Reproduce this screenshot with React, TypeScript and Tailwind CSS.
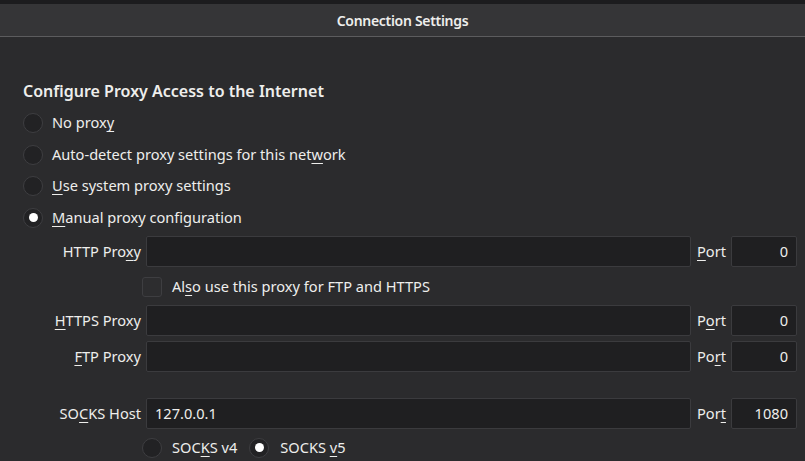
import React from "react";

const font = { fontFamily: '"Noto Sans", "Open Sans", sans-serif' };

function U({ children }: { children: React.ReactNode }) {
  return <span className="underline decoration-1 underline-offset-[3px]">{children}</span>;
}

function Radio({ checked = false }: { checked?: boolean }) {
  return (
    <span className="flex h-[20px] w-[20px] shrink-0 items-center justify-center rounded-full border border-[#3e3e41] bg-[#222224]">
      {checked && <span className="h-[9px] w-[9px] rounded-full bg-white" />}
    </span>
  );
}

function Field({ value = "", right = false }: { value?: string; right?: boolean }) {
  return (
    <div
      className={
        "flex h-[31px] items-center rounded-[2px] border border-[#3b3b3e] bg-[#1f1f21] px-[8px] text-[#eeeeec] " +
        (right ? "justify-end" : "")
      }
    >
      {value}
    </div>
  );
}

function Row({
  label,
  port,
  value,
  portValue,
}: {
  label: React.ReactNode;
  port: React.ReactNode;
  value?: string;
  portValue: string;
}) {
  return (
    <div className="flex items-center">
      <div className="w-[141px] text-right">{label}</div>
      <div className="ml-[5px] flex-1">
        <Field value={value} />
      </div>
      <div className="ml-[6px] w-[34px]">{port}</div>
      <div className="w-[66px]">
        <Field value={portValue} right />
      </div>
    </div>
  );
}

export default function App() {
  return (
    <div className="h-[461px] w-[805px] overflow-hidden bg-[#2b2b2d] text-[14.6px] text-[#eeeeec]" style={font}>
      <div className="h-[4px] bg-[#1c1c1e]" />
      <div className="flex h-[33px] items-center justify-center border-b border-[#5c5c5e] bg-[#353537] text-[14px] font-semibold tracking-[-0.3px]">
        Connection Settings
      </div>

      <div className="pr-[8px] pt-[43px]">
        <div className="pl-[23px] text-[16px] font-semibold leading-[22px]">Configure Proxy Access to the Internet</div>

        <div className="mt-[11px] flex flex-col gap-[11.67px] pl-[23px]">
          <label className="flex h-[20px] items-center gap-[9px]">
            <Radio />
            <span>
              No prox<U>y</U>
            </span>
          </label>
          <label className="flex h-[20px] items-center gap-[9px]">
            <Radio />
            <span>
              Auto-detect proxy settings for this net<U>w</U>ork
            </span>
          </label>
          <label className="flex h-[20px] items-center gap-[9px]">
            <Radio />
            <span>
              <U>U</U>se system proxy settings
            </span>
          </label>
          <label className="flex h-[20px] items-center gap-[9px]">
            <Radio checked />
            <span>
              <U>M</U>anual proxy configuration
            </span>
          </label>
        </div>

        <div className="mt-[8px]">
          <Row
            label={
              <>
                HTTP Pro<U>x</U>y
              </>
            }
            port={
              <>
                <U>P</U>ort
              </>
            }
            portValue="0"
          />
          <label className="ml-[142px] mt-[10px] flex h-[20px] items-center gap-[10px]">
            <span className="h-[20px] w-[20px] rounded-[3px] border border-[#3e3e41] bg-[#2d2d2f]" />
            <span>
              Al<U>s</U>o use this proxy for FTP and HTTPS
            </span>
          </label>
          <div className="mt-[8px] flex flex-col gap-[5px]">
            <Row
              label={
                <>
                  <U>H</U>TTPS Proxy
                </>
              }
              port={
                <>
                  P<U>o</U>rt
                </>
              }
              portValue="0"
            />
            <Row
              label={
                <>
                  <U>F</U>TP Proxy
                </>
              }
              port={
                <>
                  Po<U>r</U>t
                </>
              }
              portValue="0"
            />
          </div>
          <div className="mt-[26px]">
            <Row
              label={
                <>
                  SO<U>C</U>KS Host
                </>
              }
              value="127.0.0.1"
              port={
                <>
                  Por<U>t</U>
                </>
              }
              portValue="1080"
            />
          </div>
          <div className="ml-[142px] mt-[8px] flex items-center">
            <label className="flex items-center gap-[10px]">
              <Radio />
              <span>
                SOC<U>K</U>S v4
              </span>
            </label>
            <label className="ml-[12px] flex items-center gap-[11px]">
              <Radio checked />
              <span>
                SOCKS <U>v</U>5
              </span>
            </label>
          </div>
        </div>
      </div>
    </div>
  );
}
